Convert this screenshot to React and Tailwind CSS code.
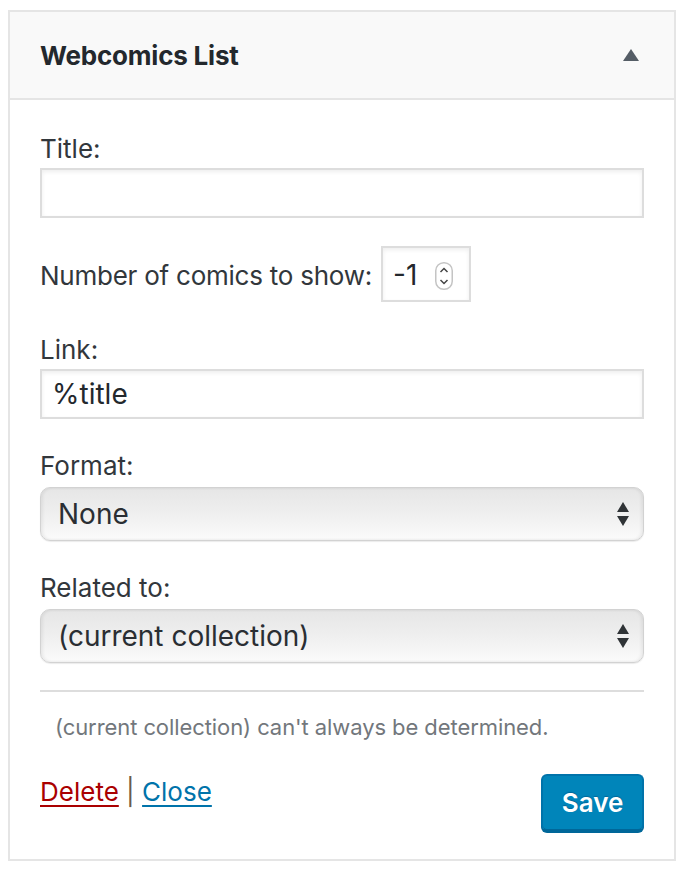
import React from "react";

function SelectArrows() {
  return (
    <svg width="14" height="26" viewBox="0 0 14 26" className="absolute right-[13px] top-1/2 -translate-y-1/2 pointer-events-none">
      <path d="M7 1 L13 11 L1 11 Z" fill="#2f3336" />
      <path d="M1 15 L13 15 L7 25 Z" fill="#2f3336" />
    </svg>
  );
}

function Spinner() {
  return (
    <svg width="18" height="28" viewBox="0 0 18 28" className="absolute left-[52px] top-[14px]">
      <rect x="0.75" y="0.75" width="16.5" height="26.5" rx="8" fill="#fff" stroke="#c4c4c4" strokeWidth="1.5" />
      <path d="M5.5 10 L9 6.5 L12.5 10" fill="none" stroke="#444" strokeWidth="1.5" />
      <path d="M5.5 18 L9 21.5 L12.5 18" fill="none" stroke="#444" strokeWidth="1.5" />
    </svg>
  );
}

function FakeSelect({ value }) {
  return (
    <div className="relative mt-[3px] h-[54px] w-full rounded-[10px] border border-[#d2d2d2] bg-gradient-to-b from-[#e6e6e6] via-[#efefef] to-[#fbfbfb] shadow-[inset_2px_0_3px_rgba(0,0,0,0.06),inset_-2px_0_3px_rgba(0,0,0,0.06),0_1px_1px_rgba(0,0,0,0.08)]">
      <div className="pl-[17px] leading-[52px] text-[28px] text-[#2a2e33]">{value}</div>
      <SelectArrows />
    </div>
  );
}

export default function App() {
  return (
    <div
      className="min-h-[872px] w-[684px] bg-white pt-[10px] pl-[8px]"
      style={{ fontFamily: "Inter, 'Liberation Sans', Arial, sans-serif" }}
    >
      <div className="w-[668px] border-2 border-[#e5e5e5] bg-white">
        <div className="flex h-[88px] items-center justify-between border-b-2 border-[#e5e5e5] bg-[#f9f9f9] pl-[30px] pr-[35px]">
          <h3 className="text-[26px] font-bold tracking-[-0.2px] text-[#23282d]">Webcomics List</h3>
          <svg width="16" height="12" viewBox="0 0 16 12">
            <path d="M8 0 L16 12 L0 12 Z" fill="#555d66" />
          </svg>
        </div>

        <div className="px-[30px] pt-[31px] pb-[28px] text-[#32373c]">
          <div className="text-[26px] leading-[36px]">Title:</div>
          <div className="mt-[1px] h-[50px] w-full border-2 border-[#dddddd] bg-white shadow-[inset_0_2px_4px_rgba(0,0,0,0.07)]" />

          <div className="mt-[28px] flex items-center gap-[9px]">
            <span className="mt-[4px] text-[26px] leading-[36px] tracking-[-0.24px]">Number of comics to show:</span>
            <div className="relative h-[56px] w-[90px] border-2 border-[#dddddd] bg-white shadow-[inset_0_2px_4px_rgba(0,0,0,0.07)]">
              <span className="absolute left-[10px] top-[9px] text-[28px] leading-[36px] text-[#23282d]">-1</span>
              <Spinner />
            </div>
          </div>

          <div className="mt-[30px] text-[26px] leading-[36px]">Link:</div>
          <div className="mt-[1px] flex h-[50px] w-full items-center border-2 border-[#dddddd] bg-white pl-[10px] text-[28px] text-[#23282d] shadow-[inset_0_2px_4px_rgba(0,0,0,0.07)]">
            %title
          </div>

          <div className="mt-[29px] text-[26px] leading-[36px]">Format:</div>
          <FakeSelect value="None" />

          <div className="mt-[29px] text-[26px] leading-[36px]">Related to:</div>
          <FakeSelect value="(current collection)" />

          <div className="mt-[27px] h-[2px] w-full bg-[#dddddd]" />

          <p className="mt-[19px] pl-[15px] text-[22px] leading-[32px] tracking-[-0.08px] text-[#72777c]">
            (current collection) can't always be determined.
          </p>

          <div className="mt-[31px] flex items-start justify-between">
            <div className="text-[26px] leading-[36px]">
              <a href="#" className="text-[#a00] underline underline-offset-[4px]">Delete</a>
              <span className="text-[#6b5a4a]"> | </span>
              <a href="#" className="text-[#0073aa] underline underline-offset-[4px]">Close</a>
            </div>
            <button className="h-[57px] w-[103px] rounded-[6px] border-2 border-[#0073aa] border-b-[#006799] bg-[#0085ba] text-[26px] font-semibold text-white shadow-[0_2px_0_#006799] [text-shadow:0_-1px_1px_#006799]">
              Save
            </button>
          </div>
        </div>
      </div>
    </div>
  );
}
